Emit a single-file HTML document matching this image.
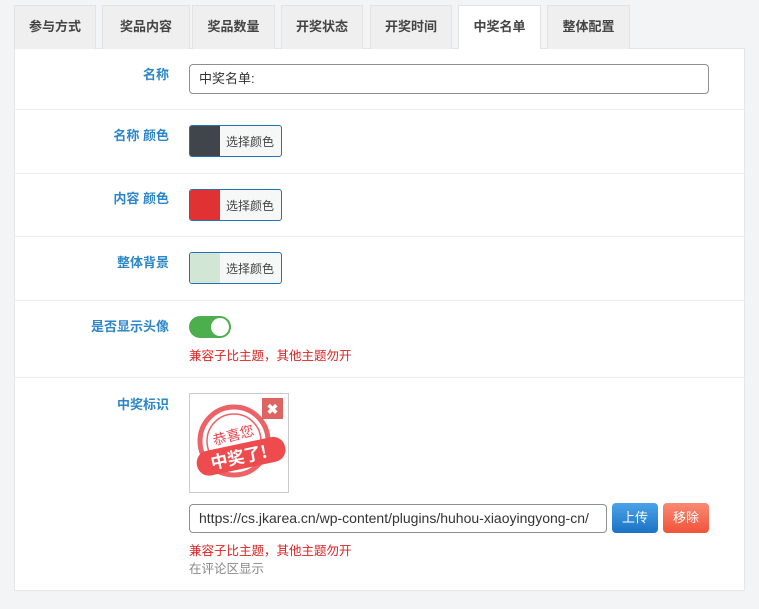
<!DOCTYPE html>
<html><head><meta charset="utf-8"><style>
*{box-sizing:border-box;margin:0;padding:0}
body{width:759px;height:609px;background:#f3f4f6;font-family:"Liberation Sans","Noto Sans CJK SC",sans-serif;font-size:13px;color:#333;position:relative;overflow:hidden}
.tab{position:absolute;top:5px;height:44px;background:#efefef;border:1px solid #e3e3e3;border-bottom:none;font-weight:bold;color:#444;font-size:13px;text-align:center;line-height:42px}
.tab.on{background:#fff;height:44px;z-index:2}
.panel{position:absolute;left:14px;top:48px;width:731px;height:543px;background:#fff;border:1px solid #e6e6e6}
.sep{position:absolute;left:14px;width:731px;height:1px;background:#ececec}
.lab{position:absolute;right:590px;color:#2c86c8;font-weight:bold;font-size:13px;white-space:nowrap}
.abs{position:absolute}
.inp{position:absolute;border:1px solid #8c8f94;border-radius:4px;background:#fff;padding-left:9px;font-size:13px;line-height:27px;color:#333;white-space:nowrap;overflow:hidden}
.col{position:absolute;left:189px;width:93px;height:32px;border:1px solid #2271b1;border-radius:3px;background:#f6f7f7;overflow:hidden}
.col i{position:absolute;left:0;top:0;width:30px;height:100%}
.col span{position:absolute;left:36px;top:7px;font-size:12px;color:#444}
.red{color:#d22;font-size:12.5px}
.btn{position:absolute;top:503px;height:30px;border-radius:4px;color:#fff;font-size:13px;text-align:center;line-height:30px}
</style></head><body>
<div class="panel"></div>
<div class="tab" style="left:14px;width:82px">参与方式</div>
<div class="tab" style="left:102px;width:88px">奖品内容</div>
<div class="tab" style="left:192px;width:83px">奖品数量</div>
<div class="tab" style="left:281px;width:82px">开奖状态</div>
<div class="tab" style="left:370px;width:82px">开奖时间</div>
<div class="tab on" style="left:458px;width:83px">中奖名单</div>
<div class="tab" style="left:547px;width:83px">整体配置</div>

<div class="sep" style="top:109px"></div>
<div class="sep" style="top:173px"></div>
<div class="sep" style="top:236px"></div>
<div class="sep" style="top:300px"></div>
<div class="sep" style="top:377px"></div>

<div class="lab" style="top:64px">名称</div>
<div class="inp" style="left:189px;top:64px;width:520px;height:30px">中奖名单:</div>

<div class="lab" style="top:125px">名称 颜色</div>
<div class="col" style="top:125px"><i style="background:#40454b"></i><span>选择颜色</span></div>

<div class="lab" style="top:188px">内容 颜色</div>
<div class="col" style="top:189px"><i style="background:#e03232"></i><span>选择颜色</span></div>

<div class="lab" style="top:252px">整体背景</div>
<div class="col" style="top:252px"><i style="background:#d2e6d6"></i><span>选择颜色</span></div>

<div class="lab" style="top:316px">是否显示头像</div>
<div class="abs" style="left:189px;top:316px;width:42px;height:22px;border-radius:11px;background:#4cae4c"><div class="abs" style="right:2px;top:2px;width:18px;height:18px;border-radius:50%;background:#fff"></div></div>
<div class="abs red" style="left:189px;top:345px">兼容子比主题，其他主题勿开</div>

<div class="lab" style="top:394px">中奖标识</div>
<div class="abs" style="left:189px;top:393px;width:100px;height:100px;border:1px solid #ccc;background:#fff">
<svg width="98" height="98" viewBox="0 0 98 98">
<circle cx="44" cy="47" r="34" fill="none" stroke="#e8464c" stroke-width="5" opacity=".85"/>
<circle cx="44" cy="47" r="27" fill="none" stroke="#e8464c" stroke-width="1.5" opacity=".85"/>
<text x="22" y="46" font-size="14" fill="#e8464c" font-family="Noto Sans CJK SC" transform="rotate(-15 44 40)">恭喜您</text>
<g transform="rotate(-12 50 62)"><rect x="6" y="50" width="90" height="25" rx="12" fill="#ee4b4f"/>
<text x="20" y="69" font-size="17" font-weight="bold" fill="#fff" font-family="Noto Sans CJK SC">中奖了!</text></g>
<rect x="72" y="4" width="21" height="21" fill="#d9534f" opacity=".9"/>
<text x="82.5" y="20" font-size="14" font-weight="bold" fill="#fff" text-anchor="middle">✖</text>
</svg></div>
<div class="inp" style="left:189px;top:504px;width:418px;height:29px;font-size:14px">https://cs.jkarea.cn/wp-content/plugins/huhou-xiaoyingyong-cn/</div>
<div class="btn" style="left:612px;width:46px;background:linear-gradient(#4aa3e8,#1c72c4)">上传</div>
<div class="btn" style="left:663px;width:46px;background:linear-gradient(#f88a74,#f0533a)">移除</div>
<div class="abs red" style="left:189px;top:540px">兼容子比主题，其他主题勿开</div>
<div class="abs" style="left:189px;top:558px;color:#888;font-size:12.5px">在评论区显示</div>
</body></html>
